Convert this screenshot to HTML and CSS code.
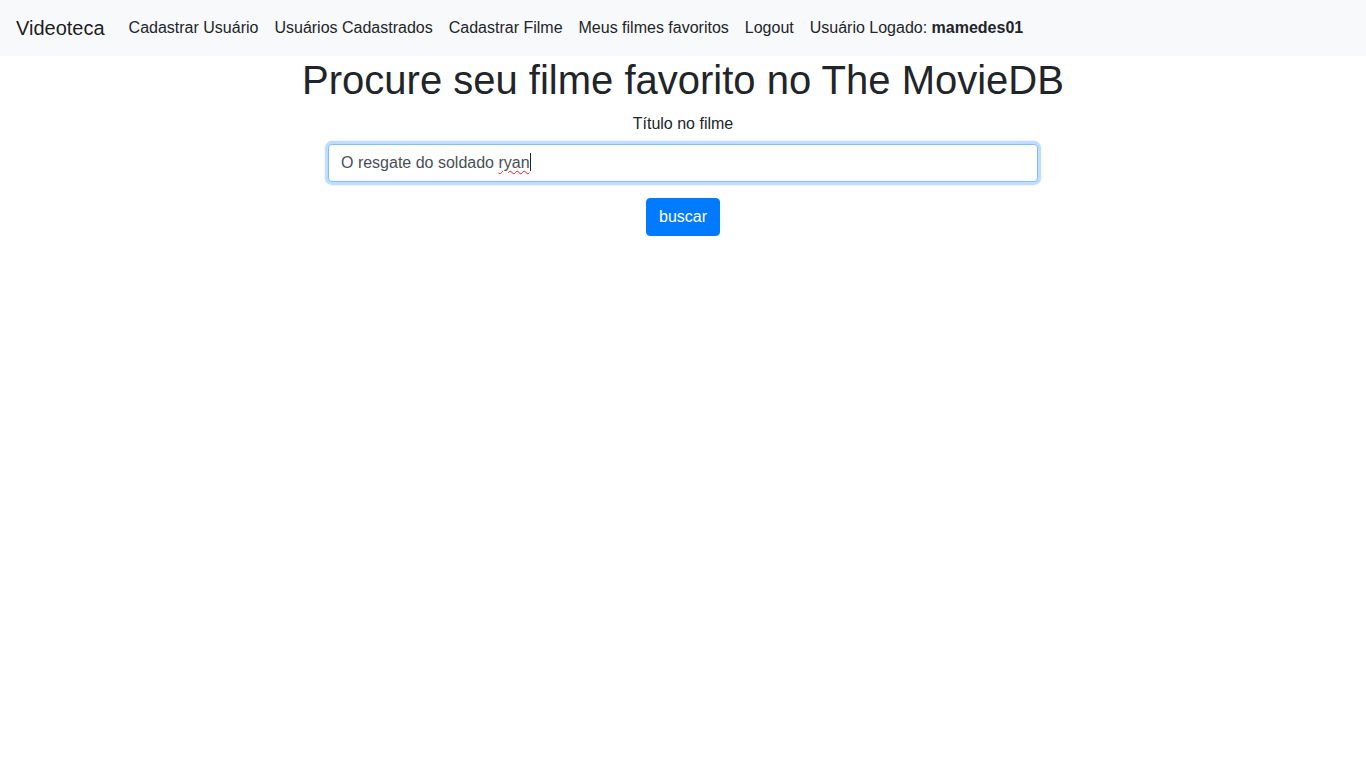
FILE: index.html
```html
<!DOCTYPE html>
<html lang="pt-br">
<head>
<meta charset="utf-8">
<title>Videoteca</title>
<link rel="stylesheet" href="styles.css">
</head>
<body>
<nav class="navbar">
  <a class="brand" href="#">Videoteca</a>
  <ul class="nav">
    <li><a class="nav-link" href="#">Cadastrar Usuário</a></li>
    <li><a class="nav-link" href="#">Usuários Cadastrados</a></li>
    <li><a class="nav-link" href="#">Cadastrar Filme</a></li>
    <li><a class="nav-link" href="#">Meus filmes favoritos</a></li>
    <li><a class="nav-link" href="#">Logout</a></li>
    <li><span class="nav-link">Usuário Logado: <b>mamedes01</b></span></li>
  </ul>
</nav>
<main class="main">
  <h1 class="title">Procure seu filme favorito no The MovieDB</h1>
  <form class="search">
    <div class="form-group">
      <label class="label">Título no filme</label>
      <div class="input" role="textbox">O resgate do soldado <span class="misspelled">ryan</span><span class="caret"></span></div>
    </div>
    <button type="button" class="btn">buscar</button>
  </form>
</main>
</body>
</html>
```
FILE: styles.css
```css
* { box-sizing: border-box; }
html, body { margin: 0; padding: 0; }
body {
  font-family: "Liberation Sans", Arial, sans-serif;
  font-size: 16px;
  line-height: 1.5;
  color: #212529;
  background: #fff;
}
.navbar {
  display: flex;
  align-items: center;
  height: 56px;
  padding: 8px 16px;
  background: #f8f9fa;
}
.brand {
  font-size: 20px;
  line-height: 30px;
  color: rgba(0,0,0,.9);
  text-decoration: none;
  margin-right: 16px;
  padding: 5px 0;
}
.nav {
  display: flex;
  list-style: none;
  margin: 0;
  padding: 0;
}
.nav-link {
  display: block;
  padding: 8px 8px;
  color: #212529;
  text-decoration: none;
}
.nav-link b { font-weight: 700; }
.main {
  display: flex;
  flex-direction: column;
  align-items: center;
}
.title {
  margin: 0 0 8px;
  font-size: 40px;
  font-weight: 500;
  line-height: 1.2;
  color: #212529;
}
.search {
  width: 710px;
  display: flex;
  flex-direction: column;
  align-items: center;
}
.form-group {
  width: 100%;
  margin-bottom: 16px;
  display: flex;
  flex-direction: column;
  align-items: center;
}
.label {
  display: block;
  margin-bottom: 8px;
}
.input {
  width: 100%;
  height: 38px;
  padding: 6px 12px;
  color: #495057;
  background: #fff;
  border: 1px solid #80bdff;
  border-radius: 4px;
  box-shadow: 0 0 0 3.2px rgba(0,123,255,.25);
  line-height: 24px;
  white-space: nowrap;
}
.misspelled {
  text-decoration: underline wavy #e01b1b;
  text-decoration-thickness: 1px;
  text-underline-offset: 2px;
}
.caret {
  display: inline-block;
  width: 1px;
  height: 18px;
  background: #212529;
  vertical-align: -3px;
}
.btn {
  font-family: inherit;
  font-size: 16px;
  line-height: 24px;
  padding: 6px 12px;
  color: #fff;
  background: #007bff;
  border: 1px solid #007bff;
  border-radius: 4px;
  cursor: pointer;
}
```
